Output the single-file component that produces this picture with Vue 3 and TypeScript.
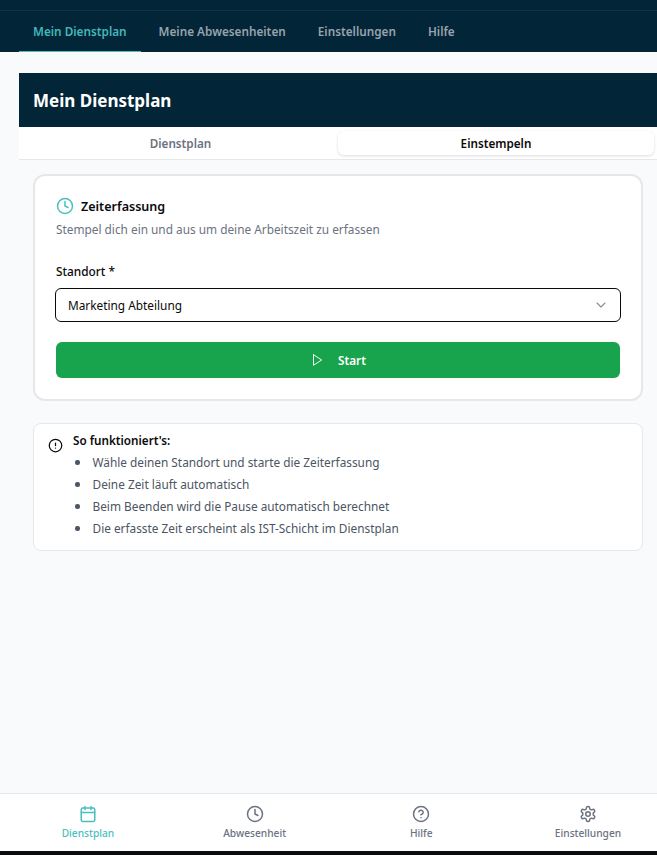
<template>
  <div class="app-shell">
    <header class="top-bar">
      <nav class="top-nav">
        <a
          v-for="item in topLinks"
          :key="item"
          class="top-link"
          :class="{ active: item === 'Mein Dienstplan' }"
        >{{ item }}</a>
      </nav>
    </header>

    <main class="page">
      <div class="page-head">
        <h1>Mein Dienstplan</h1>
      </div>
      <div class="tabs">
        <button class="tab">Dienstplan</button>
        <button class="tab selected">Einstempeln</button>
      </div>

      <section class="content">
        <div class="card">
          <div class="card-title">
            <svg class="clock" viewBox="0 0 24 24" width="20" height="20">
              <circle cx="12" cy="12" r="10" />
              <path d="M12 6v6l4 2" />
            </svg>
            <h2>Zeiterfassung</h2>
          </div>
          <p class="card-sub">Stempel dich ein und aus um deine Arbeitszeit zu erfassen</p>

          <label class="field-label">Standort *</label>
          <div class="select">
            <span>Marketing Abteilung</span>
            <svg viewBox="0 0 24 24" width="16" height="16"><path d="m6 9 6 6 6-6" /></svg>
          </div>

          <button class="start">
            <svg viewBox="0 0 24 24" width="16" height="16"><path d="M6 3l14 9-14 9V3z" /></svg>
            Start
          </button>
        </div>

        <div class="info">
          <svg viewBox="0 0 24 24" width="16" height="16">
            <circle cx="12" cy="12" r="10" />
            <path d="M12 8v4M12 16h.01" />
          </svg>
          <div>
            <h3>So funktioniert's:</h3>
            <ul>
              <li v-for="line in hints" :key="line">{{ line }}</li>
            </ul>
          </div>
        </div>
      </section>
    </main>

    <nav class="bottom-nav">
      <a class="bottom-link current">
        <svg viewBox="0 0 24 24" width="20" height="20">
          <path d="M8 2v4M16 2v4" />
          <rect x="3" y="4" width="18" height="18" rx="2" />
          <path d="M3 10h18" />
        </svg>
        Dienstplan
      </a>
      <a class="bottom-link">
        <svg viewBox="0 0 24 24" width="20" height="20">
          <circle cx="12" cy="12" r="10" />
          <path d="M12 6v6l4 2" />
        </svg>
        Abwesenheit
      </a>
      <a class="bottom-link">
        <svg viewBox="0 0 24 24" width="20" height="20">
          <circle cx="12" cy="12" r="10" />
          <path d="M9.09 9a3 3 0 0 1 5.83 1c0 2-3 3-3 3M12 17h.01" />
        </svg>
        Hilfe
      </a>
      <a class="bottom-link">
        <svg viewBox="0 0 24 24" width="20" height="20">
          <path d="M12.22 2h-.44a2 2 0 0 0-2 2v.18a2 2 0 0 1-1 1.73l-.43.25a2 2 0 0 1-2 0l-.15-.08a2 2 0 0 0-2.73.73l-.22.38a2 2 0 0 0 .73 2.73l.15.1a2 2 0 0 1 1 1.72v.51a2 2 0 0 1-1 1.74l-.15.09a2 2 0 0 0-.73 2.73l.22.38a2 2 0 0 0 2.73.73l.15-.08a2 2 0 0 1 2 0l.43.25a2 2 0 0 1 1 1.73V20a2 2 0 0 0 2 2h.44a2 2 0 0 0 2-2v-.18a2 2 0 0 1 1-1.73l.43-.25a2 2 0 0 1 2 0l.15.08a2 2 0 0 0 2.73-.73l.22-.39a2 2 0 0 0-.73-2.73l-.15-.08a2 2 0 0 1-1-1.74v-.5a2 2 0 0 1 1-1.74l.15-.09a2 2 0 0 0 .73-2.73l-.22-.38a2 2 0 0 0-2.73-.73l-.15.08a2 2 0 0 1-2 0l-.43-.25a2 2 0 0 1-1-1.73V4a2 2 0 0 0-2-2z" />
          <circle cx="12" cy="12" r="3" />
        </svg>
        Einstellungen
      </a>
    </nav>
    <div class="screen-edge" />
  </div>
</template>

<script setup lang="ts">
const topLinks: string[] = ['Mein Dienstplan', 'Meine Abwesenheiten', 'Einstellungen', 'Hilfe']

const hints: string[] = [
  'Wähle deinen Standort und starte die Zeiterfassung',
  'Deine Zeit läuft automatisch',
  'Beim Beenden wird die Pause automatisch berechnet',
  'Die erfasste Zeit erscheint als IST-Schicht im Dienstplan',
]
</script>

<style>
html,
body {
  margin: 0;
  overflow: hidden;
}
</style>

<style scoped>
.app-shell {
  display: flex;
  flex-direction: column;
  height: 855px;
  overflow: hidden;
  background: #f9fafb;
  font-family: "Noto Sans", sans-serif;
  font-size: 11.84px;
  color: #0a0a0a;
}

svg {
  fill: none;
  stroke: currentColor;
  stroke-width: 2;
  stroke-linecap: round;
  stroke-linejoin: round;
  flex: none;
}

/* top navigation */
.top-bar {
  height: 52px;
  box-sizing: border-box;
  padding-top: 10px;
  background: #032538;
}

.top-nav {
  display: flex;
  gap: 4px;
  height: 42px;
  box-sizing: border-box;
  padding-left: 19px;
  border-top: 1px solid #0e3549;
}

.top-link {
  display: flex;
  align-items: center;
  padding: 0 14px;
  font-size: 11.75px;
  font-weight: 600;
  color: #96a3ad;
  border-bottom: 1px solid transparent;
}

.top-link.active {
  color: #43b7b8;
  border-bottom-color: #4ac0bd;
}

/* page */
.page {
  flex: 1;
  padding: 21px 0 0 19px;
}

.page-head {
  display: flex;
  align-items: center;
  height: 54px;
  padding-left: 14px;
  background: #032538;
}

h1 {
  margin: 0;
  font-size: 17px;
  font-weight: 700;
  color: #fff;
}

.tabs {
  display: grid;
  grid-template-columns: 315px 316px;
  height: 33px;
  box-sizing: border-box;
  padding: 4px 3px 4px 4px;
  background: #fff;
  border-bottom: 1px solid #e5e7eb;
}

.tab {
  border: 0;
  background: transparent;
  border-radius: 6px;
  font: 600 11.7px "Noto Sans", sans-serif;
  color: #6b7280;
  padding: 0;
}

.tab.selected {
  color: #0a0a0a;
  background: #fff;
  box-shadow: 0 1px 3px rgba(0, 0, 0, 0.14);
}

.content {
  display: flex;
  flex-direction: column;
  gap: 22px;
  padding: 14px 14px 0;
}

/* clock-in card */
.card {
  height: 227px;
  box-sizing: border-box;
  padding: 20px 21px 0;
  background: #fff;
  border: 2px solid #e5e7eb;
  border-radius: 12px;
}

.card-title {
  display: flex;
  align-items: center;
  gap: 7px;
  height: 20px;
}

.clock {
  color: #4ac0bd;
  width: 18px;
  height: 18px;
}

h2 {
  margin: 0;
  font-size: 12.55px;
  font-weight: 600;
}

.card-sub {
  margin: 5px 0 0;
  line-height: 17px;
  color: #6b7280;
}

.field-label {
  display: block;
  margin-top: 25px;
  line-height: 17px;
  font-weight: 500;
}

.select {
  display: flex;
  align-items: center;
  justify-content: space-between;
  height: 34px;
  box-sizing: border-box;
  margin: 8px -1px 0;
  padding: 0 11px 0 12px;
  border: 1px solid #0a0a0a;
  border-radius: 6px;
}

.select svg {
  color: #8c8c80;
  stroke-width: 1.6;
  width: 16px;
  height: 16px;
}

.start {
  display: flex;
  align-items: center;
  justify-content: center;
  gap: 14px;
  width: 100%;
  height: 36px;
  margin-top: 20px;
  border: 0;
  border-radius: 6px;
  background: #18a44c;
  color: #fff;
  font: 600 11.7px "Noto Sans", sans-serif;
}

.start svg {
  width: 14px;
  height: 14px;
  stroke-width: 1.6;
}

/* hints */
.info {
  display: flex;
  gap: 10px;
  height: 128px;
  box-sizing: border-box;
  padding: 8px 14px;
  background: #fff;
  border: 1px solid #e5e7eb;
  border-radius: 8px;
}

.info > svg {
  width: 15px;
  height: 15px;
  margin-top: 6px;
}

h3 {
  margin: 0;
  font-size: 11.7px;
  line-height: 16px;
  font-weight: 600;
}

ul {
  margin: 6px 0 0;
  padding: 0 0 0 2px;
  list-style: none;
}

li {
  display: flex;
  align-items: center;
  gap: 13px;
  line-height: 17px;
  margin-bottom: 5px;
  color: #4b5563;
}

li::before {
  content: "";
  width: 4.5px;
  height: 4.5px;
  border-radius: 50%;
  background: #4b5563;
}

/* bottom navigation */
.bottom-nav {
  display: grid;
  grid-template-columns: repeat(4, 166.7px);
  height: 58px;
  box-sizing: border-box;
  padding-left: 4.6px;
  background: #fff;
  border-top: 1px solid #e5e7eb;
}

.bottom-link {
  display: flex;
  flex-direction: column;
  align-items: center;
  gap: 3px;
  padding-top: 11px;
  font-size: 10.2px;
  font-weight: 500;
  line-height: 14px;
  color: #6b7280;
}

.bottom-link svg {
  width: 18px;
  height: 18px;
}

.bottom-link.current {
  color: #4ac0bd;
}

.screen-edge {
  height: 4px;
  background: #0a0d10;
}
</style>
